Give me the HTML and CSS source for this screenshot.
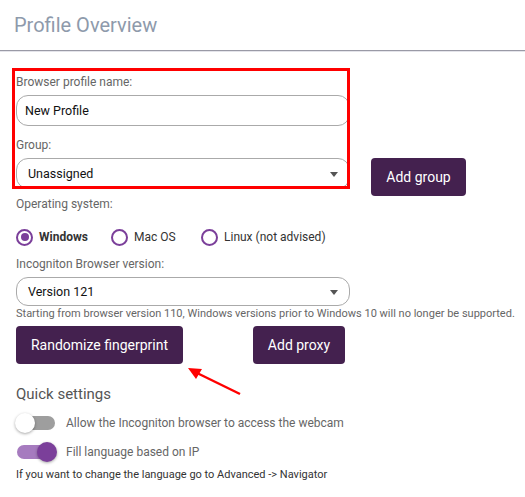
FILE: index.html
```html
<!DOCTYPE html>
<html lang="en">

<head>
  <meta charset="UTF-8">
  <meta name="viewport" content="width=device-width, initial-scale=1.0">
  <title>Profile Overview</title>
  <link rel="stylesheet" href="styles.css">
</head>

<body>
  <div class="header">
    <div class="title">Profile Overview</div>
  </div>

  <div class="content">
    <div class="highlight"></div>

    <div class="label first">Browser profile name:</div>
    <div class="field">New Profile</div>

    <div class="label">Group:</div>
    <div class="group-row">
      <div class="field select">Unassigned<span class="caret"></span></div>
      <button class="btn btn-group">Add group</button>
    </div>

    <div class="label os">Operating system:</div>
    <div class="radios">
      <div class="radio checked"><span class="dot"></span><b>Windows</b></div>
      <div class="radio"><span class="dot"></span>Mac OS</div>
      <div class="radio"><span class="dot"></span>Linux (not advised)</div>
    </div>

    <div class="label version">Incogniton Browser version:</div>
    <div class="field select version-select">Version 121<span class="caret"></span></div>
    <div class="hint">Starting from browser version 110, Windows versions prior to Windows 10 will no longer be supported.</div>

    <div class="actions">
      <button class="btn btn-random">Randomize fingerprint</button>
      <button class="btn btn-proxy">Add proxy</button>
    </div>

    <svg class="arrow" width="60" height="32" viewBox="0 0 60 32">
      <line x1="55" y1="27" x2="10" y2="5" stroke="#f00" stroke-width="2.5" />
      <polygon points="3,1 17,2 11,12" fill="#f00" />
    </svg>

    <div class="section">Quick settings</div>
    <div class="toggle-row">
      <span class="toggle"><span class="knob"></span></span>
      Allow the Incogniton browser to access the webcam
    </div>
    <div class="toggle-row">
      <span class="toggle on"><span class="knob"></span></span>
      Fill language based on IP
    </div>
    <div class="note">If you want to change the language go to Advanced -&gt; Navigator</div>
  </div>
</body>

</html>
```

FILE: styles.css
```css
body {
  margin: 0;
  padding: 0;
  font-family: Roboto, "Liberation Sans", sans-serif;
  background: white;
  color: #333;
}

.header {
  height: 50px;
  border-bottom: 1px solid #9a9aa6;
  box-shadow: 0 1px 0 #e4e4ea;
}

.title {
  padding: 13px 0 0 14px;
  font-size: 20px;
  line-height: 24px;
  color: #8e9aab;
}

.content {
  position: relative;
  padding: 23px 16px 0 16px;
}

.highlight {
  position: absolute;
  left: 12px;
  top: 17px;
  width: 332px;
  height: 115px;
  border: 3px solid #f00;
  z-index: 2;
}

.label {
  margin-top: 11px;
  font-size: 12px;
  line-height: 16px;
  color: #666;
}

.label.first {
  margin-top: 0;
}

.label.os {
  margin-top: 0;
}

.label.version {
  margin-top: 9px;
}

.field {
  position: relative;
  box-sizing: border-box;
  width: 334px;
  height: 31px;
  margin-top: 5px;
  padding: 0 8px;
  border: 1px solid #aaa;
  border-radius: 12px;
  font-size: 12.5px;
  line-height: 29px;
  color: #111;
}

.select {
  padding-left: 11px;
}

.version-select {
  height: 29px;
  line-height: 27px;
}

.caret {
  position: absolute;
  right: 11px;
  top: 50%;
  margin-top: -2px;
  border-left: 4px solid transparent;
  border-right: 4px solid transparent;
  border-top: 5px solid #555;
}

.group-row {
  display: flex;
  align-items: flex-start;
  gap: 21px;
}

.btn {
  box-sizing: border-box;
  height: 38px;
  border: none;
  border-radius: 4px;
  background: #44214f;
  color: white;
  font-family: Roboto, "Liberation Sans", sans-serif;
  font-size: 14px;
  cursor: pointer;
}

.btn-group {
  width: 95px;
  margin-top: 5px;
}

.radios {
  display: flex;
  gap: 0;
  margin-top: 15px;
  height: 20px;
}

.radio {
  display: flex;
  align-items: center;
  gap: 6px;
  font-size: 12px;
  color: #333;
}

.radio.checked {
  width: 95px;
}

.radio:nth-child(2) {
  width: 90px;
}

.radio b {
  font-weight: 700;
}

.dot {
  position: relative;
  box-sizing: border-box;
  width: 17px;
  height: 17px;
  border: 2px solid #7b3f9a;
  border-radius: 50%;
}

.radio.checked .dot::after {
  content: "";
  position: absolute;
  left: 2.5px;
  top: 2.5px;
  width: 8px;
  height: 8px;
  border-radius: 50%;
  background: #7b3f9a;
}

.hint {
  margin-top: 1px;
  font-size: 11px;
  line-height: 14px;
  color: #666;
  white-space: nowrap;
}

.actions {
  display: flex;
  gap: 70px;
  margin-top: 5px;
}

.btn-random {
  width: 167px;
}

.btn-proxy {
  width: 92px;
}

.arrow {
  position: absolute;
  left: 185px;
  top: 316px;
}

.section {
  margin-top: 20px;
  font-size: 15px;
  line-height: 20px;
  color: #555;
}

.toggle-row {
  display: flex;
  align-items: center;
  gap: 11px;
  height: 20px;
  margin-top: 9px;
  font-size: 12px;
  color: #666;
}

.toggle {
  position: relative;
  width: 38px;
  height: 14px;
  margin-left: 1px;
  border-radius: 7px;
  background: #9e9e9e;
}

.knob {
  position: absolute;
  left: -2px;
  top: -3px;
  width: 20px;
  height: 20px;
  border-radius: 50%;
  background: white;
  box-shadow: 0 1px 3px rgba(0, 0, 0, 0.35);
}

.toggle.on {
  background: #a67bbf;
}

.toggle.on .knob {
  left: 20px;
  background: #7b3f9a;
}

.note {
  margin-top: 6px;
  font-size: 11px;
  line-height: 14px;
  color: #333;
}
```
